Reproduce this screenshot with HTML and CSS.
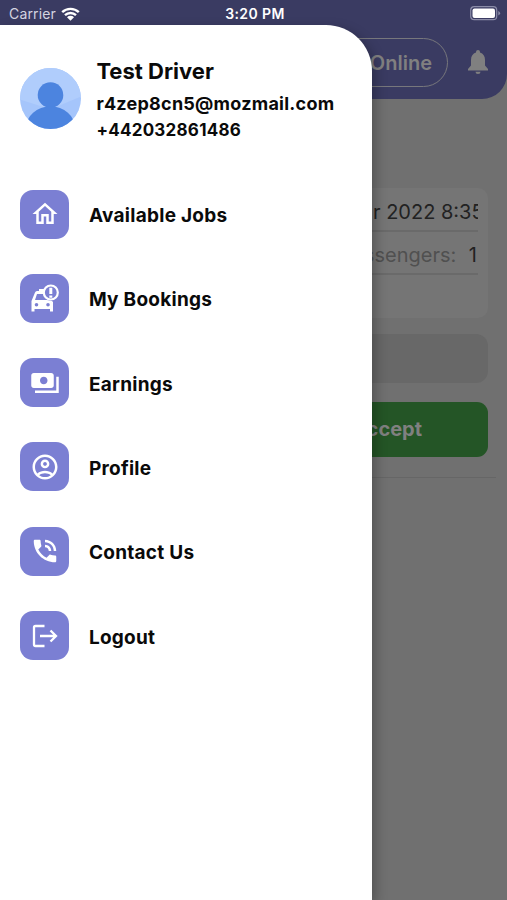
FILE: index.html
```html
<!DOCTYPE html>
<html>

<head>
    <meta charset="utf-8">
    <title>Driver</title>
    <link rel="stylesheet" href="styles.css">
</head>

<body>
    <div class="screen">
        <header class="header">
            <div class="online">Online</div>
            <svg class="bell" viewBox="0 0 20 24">
                <path d="M10 0a2 2 0 0 0-2 2v.6C4.800 3.500 3 6.300 3 10v5.500L0 19v1.500h20V19l-3-3.500V10c0-3.700-1.800-6.500-5-7.400V2a2 2 0 0 0-2-2zM7.500 21.700a2.500 2.300 0 0 0 5 0z"/>
            </svg>
        </header>

        <main class="job">
            <div class="card">
                <div class="row date">r 2022 8:35</div>
                <div class="row passengers"><span>ssengers:</span> 1</div>
            </div>
            <div class="field"></div>
            <div class="accept">Accept</div>
        </main>

        <div class="statusbar">
            <div class="carrier">
                Carrier
                <svg width="19" height="14" viewBox="0 0 19 14">
                    <path d="M1.200 5.200a12 12 0 0 1 16.600 0M4 8.200a8 8 0 0 1 11 0" fill="none" stroke="#fff" stroke-width="2.400"/>
                    <path d="M9.500 13.800L6 10.300a5 5 0 0 1 7 0z" fill="#fff"/>
                </svg>
            </div>
            <div class="time">3:20 PM</div>
            <svg class="battery" width="31" height="15" viewBox="0 0 31 15">
                <rect x=".7" y=".7" width="26" height="13" rx="3.500" fill="none" stroke="#8b8ca8" stroke-width="1.200"/>
                <rect x="2.500" y="2.500" width="22.500" height="9.500" rx="2" fill="#fff"/>
                <path d="M28.300 5v4.600q1.800-.8 1.800-2.300T28.300 5z" fill="#8b8ca8"/>
            </svg>
        </div>

        <nav class="drawer">
            <div class="user">
                <svg class="avatar" viewBox="0 0 62 62">
                    <defs>
                        <clipPath id="round"><circle cx="31" cy="31" r="31"/></clipPath>
                    </defs>
                    <g clip-path="url(#round)">
                        <rect width="62" height="62" fill="#a5c5fb"/>
                        <path d="M0 0h62v29L31 42 0 32z" fill="#b0cdfc"/>
                        <circle cx="31" cy="27.500" r="13" fill="#4c84df"/>
                        <ellipse cx="31" cy="61" rx="25" ry="22" fill="#4c84df"/>
                    </g>
                </svg>
                <div class="info">
                    <div class="name">Test Driver</div>
                    <div class="email">r4zep8cn5@mozmail.com</div>
                    <div class="phone">+442032861486</div>
                </div>
            </div>

            <div class="menu">
                <div class="item">
                    <div class="tile">
                        <svg viewBox="0 0 24 24"><path d="M12 5.690l5 4.500V18h-2v-6H9v6H7v-7.810l5-4.500M12 3L2 12h3v8h6v-6h2v6h6v-8h3z"/></svg>
                    </div>
                    <span>Available Jobs</span>
                </div>
                <div class="item">
                    <div class="tile">
                        <svg viewBox="0 0 30 30">
                            <path fill-rule="evenodd" d="M5 9.500Q5.500 8 7 8h2V6h5v5H7l-2 6h12l5 1 1 1v9.500h-3V26H4.500v2.500h-3V18zM6.500 20a1.800 1.800 0 1 0 0 3.600 1.800 1.800 0 0 0 0-3.600zM18 20a1.800 1.800 0 1 0 0 3.600 1.800 1.800 0 0 0 0-3.600z"/>
                            <circle cx="20.800" cy="9.500" r="7" fill="#7b7fd3" stroke="#fff" stroke-width="2.200"/>
                            <path d="M19.300 4.800h3v6.200h-3zM19.300 12.500h3v2.300h-3z"/>
                        </svg>
                    </div>
                    <span>My Bookings</span>
                </div>
                <div class="item">
                    <div class="tile">
                        <svg viewBox="0 0 24 24"><path d="M19 14V6c0-1.100-.9-2-2-2H3c-1.100 0-2 .9-2 2v8c0 1.100.9 2 2 2h14c1.100 0 2-.9 2-2zm-8-1c-1.660 0-3-1.340-3-3s1.340-3 3-3 3 1.340 3 3-1.340 3-3 3zm12-6v13H4v-2h17V7h2z"/></svg>
                    </div>
                    <span>Earnings</span>
                </div>
                <div class="item">
                    <div class="tile">
                        <svg viewBox="0 0 24 24"><path d="M12 2C6.480 2 2 6.480 2 12s4.480 10 10 10 10-4.480 10-10S17.520 2 12 2zM7.350 18.500C8.660 17.560 10.260 17 12 17s3.340.56 4.650 1.500C15.340 19.440 13.740 20 12 20s-3.340-.56-4.650-1.500zm10.790-1.380C16.450 15.800 14.320 15 12 15s-4.450.8-6.140 2.120C4.700 15.730 4 13.950 4 12c0-4.420 3.580-8 8-8s8 3.580 8 8c0 1.950-.7 3.730-1.860 5.120zM12 6c-1.930 0-3.500 1.570-3.500 3.500S10.070 13 12 13s3.500-1.570 3.500-3.500S13.930 6 12 6zm0 5c-.83 0-1.500-.67-1.500-1.500S11.170 8 12 8s1.500.67 1.500 1.500S12.830 11 12 11z"/></svg>
                    </div>
                    <span>Profile</span>
                </div>
                <div class="item">
                    <div class="tile">
                        <svg viewBox="0 0 24 24"><path d="M20 15.500c-1.250 0-2.450-.2-3.570-.57-.35-.11-.74-.03-1.020.24l-2.200 2.200c-2.830-1.440-5.150-3.750-6.590-6.590l2.200-2.200c.28-.28.36-.67.25-1.020C8.700 6.450 8.500 5.250 8.500 4c0-.55-.45-1-1-1H4c-.55 0-1 .45-1 1 0 9.390 7.610 17 17 17 .55 0 1-.45 1-1v-3.500c0-.55-.45-1-1-1zM19 12h2c0-4.970-4.030-9-9-9v2c3.870 0 7 3.130 7 7zm-4 0h2c0-2.760-2.240-5-5-5v2c1.660 0 3 1.340 3 3z"/></svg>
                    </div>
                    <span>Contact Us</span>
                </div>
                <div class="item">
                    <div class="tile">
                        <svg viewBox="0 0 30 30"><path class="line" d="M14.500 5H5.500Q4 5 4 6.500v17Q4 25 5.500 25h9M10 15h16M20.500 9.500L26 15l-5.500 5.500"/></svg>
                    </div>
                    <span>Logout</span>
                </div>
            </div>
        </nav>
    </div>
</body>

</html>
```
FILE: styles.css
```css
* {
    box-sizing: border-box;
}

body {
    margin: 0;
    font-family: Inter, "Liberation Sans", sans-serif;
}

.screen {
    position: relative;
    width: 507px;
    height: 900px;
    overflow: hidden;
    background: #707070;
}

.header {
    display: flex;
    justify-content: flex-end;
    align-items: flex-start;
    gap: 20px;
    height: 99px;
    padding: 37.5px 19px 0 0;
    background: #3a3b62;
    border-radius: 0 0 25px 0;
}

.online {
    width: 150px;
    height: 49px;
    padding-right: 15px;
    border: 1.5px solid #77777c;
    border-radius: 25px;
    color: #808080;
    font-size: 20px;
    font-weight: 600;
    line-height: 48px;
    text-align: right;
}

.bell {
    width: 20px;
    height: 24px;
    margin-top: 12.5px;
    fill: #808080;
}

.job {
    margin: 89px 11px 0 300px;
    padding-right: 8px;
    height: 290px;
    border-bottom: 1px solid #666;
}

.card {
    height: 130px;
    padding: 0 10px;
    background: #757575;
    border-radius: 10px;
}

.row {
    height: 43px;
    overflow: hidden;
    border-bottom: 2px solid #6a6a6a;
    color: #222;
    font-size: 20px;
    line-height: 46px;
    white-space: nowrap;
}

.date {
    height: 44px;
    padding-left: 63px;
    line-height: 48px;
}

.passengers {
    padding-right: 1px;
    text-align: right;
}

.passengers span {
    margin-right: 7px;
    color: #505050;
}

.field {
    height: 49px;
    margin-top: 16px;
    background: #686868;
    border-radius: 12px;
}

.accept {
    height: 55px;
    margin-top: 19px;
    padding-right: 66px;
    background: #245526;
    border-radius: 11px;
    color: #808080;
    font-size: 20px;
    font-weight: 700;
    line-height: 55px;
    text-align: right;
}

/* status bar and drawer lie over the page */
.statusbar {
    position: absolute;
    top: 0;
    left: 0;
    display: grid;
    grid-template-columns: 1fr auto 1fr;
    align-items: center;
    width: 507px;
    height: 27px;
    padding: 0 6px 0 9px;
    color: #fff;
    font-size: 14px;
}

.carrier {
    display: flex;
    align-items: center;
    gap: 5px;
    color: #d4d4e0;
    letter-spacing: 0.15px;
}

.time {
    font-weight: 600;
    letter-spacing: 0.4px;
}

.battery {
    justify-self: end;
}

.drawer {
    position: absolute;
    top: 25px;
    left: 0;
    width: 372.4px;
    height: 875px;
    padding: 34px 0 0 20.4px;
    background: #fff;
    border-radius: 0 46px 0 0;
    box-shadow: 4px 4px 12px rgba(0, 0, 0, 0.25);
    color: #0a0a0a;
    font-weight: 700;
}

.user {
    display: flex;
    gap: 15px;
    height: 130.6px;
}

.avatar {
    width: 61px;
    height: 61px;
    margin-top: 9px;
}

.info {
    white-space: nowrap;
}

.name {
    font-size: 22px;
    line-height: 25px;
}

.email {
    margin-top: 7px;
    font-size: 18px;
    line-height: 26px;
    letter-spacing: 0.24px;
}

.phone {
    font-size: 17px;
    line-height: 26px;
    letter-spacing: 0.25px;
}

.menu {
    display: flex;
    flex-direction: column;
    gap: 35.3px;
}

.item {
    display: flex;
    align-items: center;
    gap: 19.5px;
    height: 49px;
    font-size: 19px;
    letter-spacing: 0.27px;
}

.item span {
    padding-top: 3px;
}

.tile {
    display: flex;
    align-items: center;
    justify-content: center;
    width: 49px;
    height: 49px;
    background: #7b7fd3;
    border-radius: 13px;
}

.tile svg {
    width: 30px;
    height: 30px;
    fill: #fff;
}

.tile .line {
    fill: none;
    stroke: #fff;
    stroke-width: 2.3;
}
```
